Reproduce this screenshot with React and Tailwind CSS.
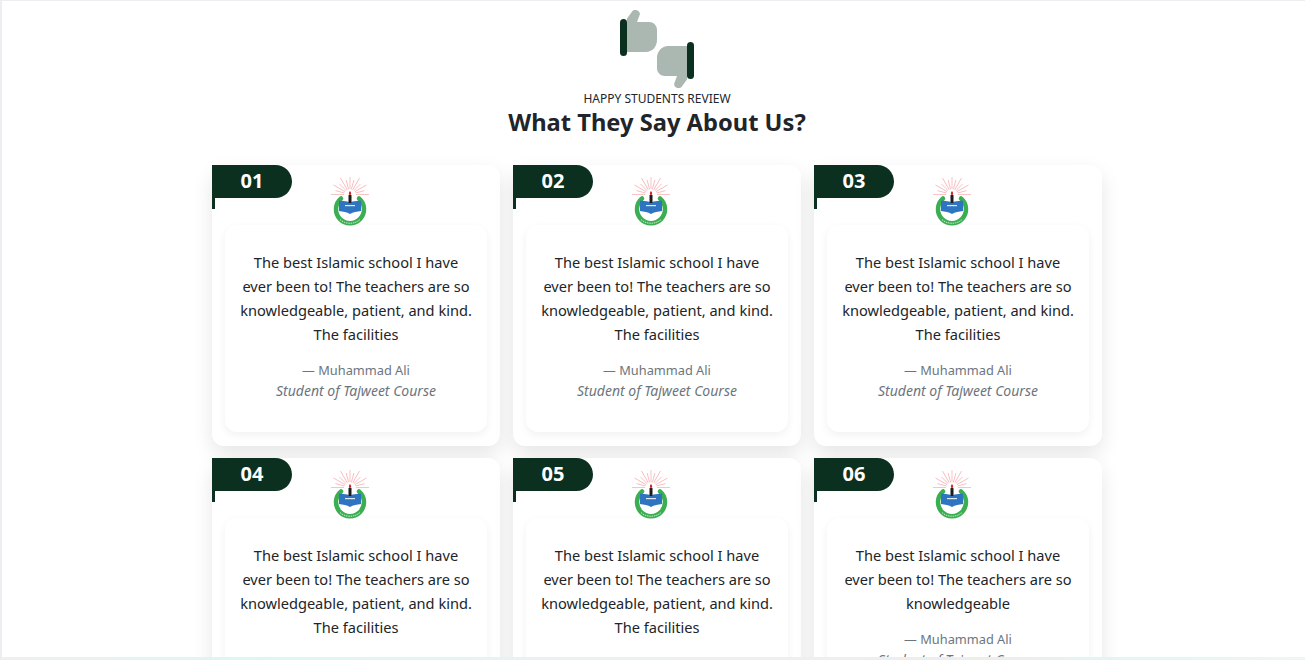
import React from 'react';

const quote = 'The best Islamic school I have ever been to! The teachers are so knowledgeable, patient, and kind. The facilities';

const reviews = [
  { id: '01', text: quote },
  { id: '02', text: quote },
  { id: '03', text: quote },
  { id: '04', text: quote },
  { id: '05', text: quote },
  { id: '06', text: 'The best Islamic school I have ever been to! The teachers are so knowledgeable' },
];

const rays = [-90, -75, -60, -45, -30, -15, 0, 15, 30, 45, 60, 75, 90];

const ThumbsLogo = () => (
  <svg width="74" height="80" viewBox="0 0 74 80" className="block">
    <path d="M7 9.5 L12.5 2 C14.5 -0.5 20.5 1.5 19.8 5.5 L17 13 L29 13 C33.5 13 37 16.5 37 21 L37 31 C37 38 32 43 26 43 L7 43 Z" fill="#abb8b1" />
    <rect x="0" y="10" width="7" height="37" rx="3.5" fill="#0b3020" />
    <g transform="rotate(180 37 40)">
      <path d="M7 9.5 L12.5 2 C14.5 -0.5 20.5 1.5 19.8 5.5 L17 13 L29 13 C33.5 13 37 16.5 37 21 L37 31 C37 38 32 43 26 43 L7 43 Z" fill="#abb8b1" />
      <rect x="0" y="10" width="7" height="37" rx="3.5" fill="#0b3020" />
    </g>
  </svg>
);

const SchoolLogo = () => (
  <svg width="40" height="50" viewBox="0 0 40 50" className="block">
    {rays.map((a) => (
      <line key={a} x1="20" y1="17.5" x2="20" y2={a % 30 === 0 ? -1.5 : 2.5} stroke="#f8b4b8" strokeWidth="0.8" transform={`rotate(${a} 20 17.5)`} />
    ))}
    <circle cx="20" cy="18" r="6" fill="#fff" />
    <path d="M11 21.5 A14 14 0 1 0 29 21.5" stroke="#3cae52" strokeWidth="4.5" strokeLinecap="round" fill="none" />
    <path d="M9 23.5 L17.5 24.5 L20 26 L22.5 24.5 L31 23.5 L31 34 C27 34.5 23 35 20 37 C17 35 13 34.5 9 34 Z" fill="#2f74c0" />
    <rect x="18.5" y="18" width="3" height="8" fill="#1c1c1c" />
    <path d="M20 14 C21.6 15.5 21.6 17.5 20 18.5 C18.4 17.5 18.4 15.5 20 14 Z" fill="#d8232a" />
    <rect x="15" y="28" width="10" height="1.2" fill="#dfeaf5" />
    <path d="M10 42.5 C15 47.5 25 47.5 30 42.5" stroke="#d9f0dd" strokeWidth="0.9" strokeDasharray="1.5 0.8" fill="none" />
  </svg>
);

const ReviewCard = ({ review }) => (
  <div className="relative h-[280.5px] rounded-xl bg-white px-[13px] pt-3 shadow-[0_8px_20px_rgba(0,0,0,0.1)]">
    <div className="absolute left-0 top-0 flex h-[33px] w-20 items-center justify-center rounded-r-full bg-[#0b3020] pb-[1px] text-xl font-bold text-white">
      {review.id}
    </div>
    <div className="absolute left-0 top-[33px] h-[11px] w-[3px] bg-[#0b3020]" />
    <div className="flex justify-center pr-3">
      <SchoolLogo />
    </div>
    <div className="-mt-[2px] flex h-[207px] flex-col items-center rounded-xl bg-white px-[14px] pt-[25px] text-center shadow-[0_3px_8px_rgba(0,0,0,0.06)]">
      <p className="text-[14.6px] leading-6 text-[#212529]">{review.text}</p>
      <p className="mt-[14px] text-[12.8px] leading-[21px] text-[#6c757d]">— Muhammad Ali</p>
      <p className="text-sm italic leading-5 text-[#6c757d]">Student of Tajweet Course</p>
    </div>
  </div>
);

const App = () => (
  <div className="relative h-[660px] overflow-hidden border-l-2 border-t border-[#eceef1] bg-white pl-[7px] font-['Noto_Sans',sans-serif]">
    <div className="flex flex-col items-center pt-2">
      <ThumbsLogo />
      <p className="mt-[1px] text-xs leading-[18px] text-[#212529]">HAPPY STUDENTS REVIEW</p>
      <h2 className="-mt-[1px] text-[23.7px] font-bold leading-[30px] text-[#212529]">What They Say About Us?</h2>
    </div>
    <div className="mx-auto mt-[28px] grid w-[890px] grid-cols-3 gap-x-[13px] gap-y-3">
      {reviews.map((review) => (
        <ReviewCard key={review.id} review={review} />
      ))}
    </div>
    <div className="absolute bottom-0 -left-[2px] right-0 h-[3px] bg-[linear-gradient(90deg,#eef0ee,#def5f7_20%,#e6f3f4_35%,#efefee_60%,#eceeec_79%,#e2f5f6_85%,#eef6f2_100%)]" />
  </div>
);

export default App;
